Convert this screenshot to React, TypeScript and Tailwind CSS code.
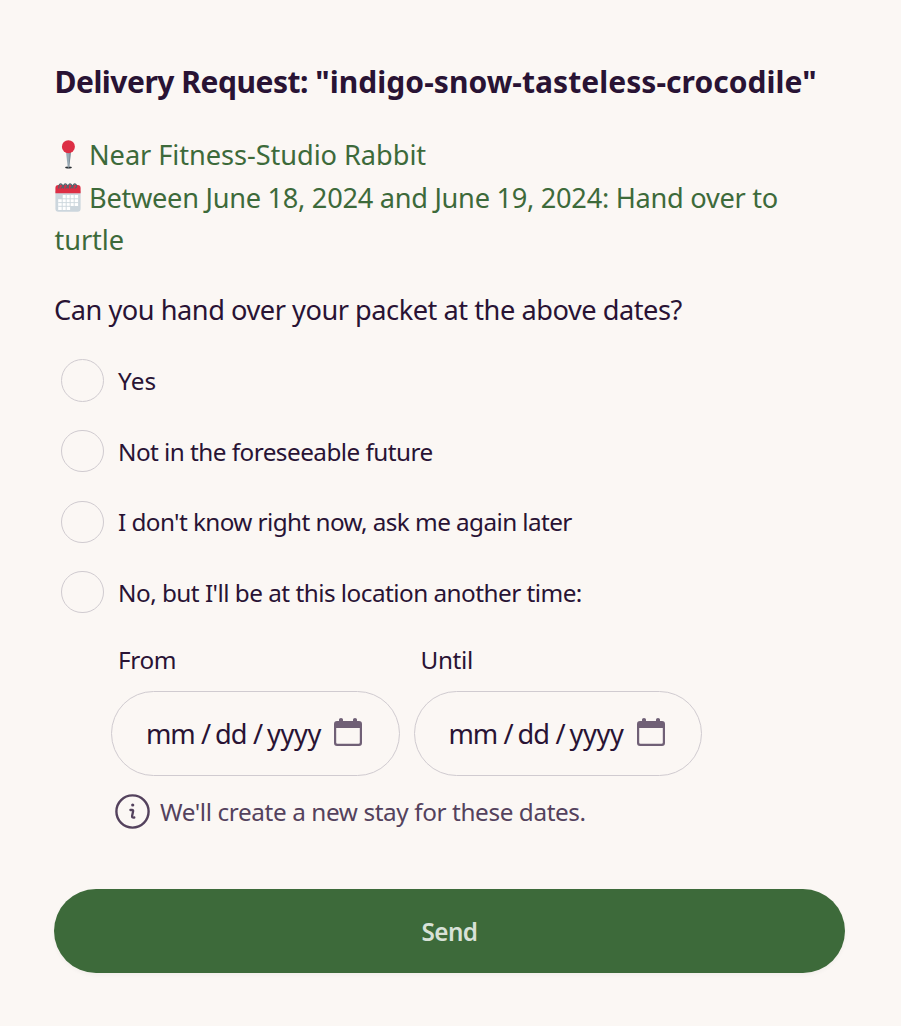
function Pin() {
  return (
    <svg viewBox="0 0 28 30" aria-hidden="true" className="-mt-px h-[30px] w-[28px] shrink-0">
      <ellipse cx="14.5" cy="27.5" rx="3.3" ry="1.1" fill="#292f33" />
      <path d="M12 12h5l-1.7 15q-.8 1-1.6 0z" fill="#99aab5" />
      <path d="M15.5 12H17l-1.7 15-.6.5z" fill="#66757f" opacity=".5" />
      <circle cx="14.4" cy="6.7" r="6.5" fill="#dd2e44" />
    </svg>
  );
}

function Calendar() {
  return (
    <svg viewBox="0 0 26 29" aria-hidden="true" className="-mt-[2px] ml-px h-[29px] w-[26px] shrink-0">
      <path d="M.4 8h25.2v17.7a3 3 0 0 1-3 3H3.4a3 3 0 0 1-3-3z" fill="#ccd6dd" />
      <path d="M.4 10.2V5a2.9 2.9 0 0 1 2.9-2.9h19.4A2.9 2.9 0 0 1 25.6 5v5.2z" fill="#dd2e44" />
      <path d="M7.3 12h15.8v11h-8v4H3.2V15.9h4.1z" fill="#fff" />
      <path d="M7.2 12v15M11.2 12v15M15.2 12v12M19.2 12v11M3.2 15.8h20M3.2 19.6h20M3.2 23.3h12" stroke="#ccd6dd" strokeWidth=".9" />
      <path d="M4 5.5C3.2 2 5.2.2 6.8 1.5S7 5.5 5.7 4.8M8.7 5.5C7.9 2 9.9.2 11.5 1.5S11.7 5.5 10.4 4.8M13.4 5.5C12.6 2 14.6.2 16.2 1.5S16.4 5.5 15.1 4.8M18.1 5.5C17.3 2 19.3.2 20.9 1.5S21.1 5.5 19.8 4.8" fill="none" stroke="#56636c" strokeWidth="1.3" />
    </svg>
  );
}

function DateField({ label }: { label: string }) {
  return (
    <div className="w-[288.5px]">
      <div className="h-[51px] pl-[7px] text-[24.3px] leading-[40px] tracking-[-0.35px]">{label}</div>
      <div className="flex h-[85px] items-center rounded-full border border-[#d0cbd0] pl-[34px] text-[27.2px]">
        <span className="w-[55px] pt-[2px] tracking-[-1.1px]">mm</span>
        <span className="w-[14px] pt-[2px]">/</span>
        <span className="w-[38px] pt-[2px] tracking-[-0.9px]">dd</span>
        <span className="w-[14px] pt-[2px]">/</span>
        <span className="w-[67px] pt-[2px] tracking-[-0.4px]">yyyy</span>
        <svg viewBox="0 0 28 28" aria-hidden="true" className="-mt-[3px] h-[28px] w-[28px] shrink-0">
          <path
            d="M5 1.5Q5 0 7 0T9 1.5V3h10V1.5Q19 0 21 0t2 1.5V3h2q3 0 3 3v19q0 3-3 3H3q-3 0-3-3V6q0-3 3-3h2zM2.2 10v14.5q0 1.3 1.3 1.3h21q1.3 0 1.3-1.3V10z"
            fill="#706076"
            fillRule="evenodd"
          />
        </svg>
      </div>
    </div>
  );
}

const options = [
  { text: "Yes", tracking: "tracking-[0.1px]" },
  { text: "Not in the foreseeable future", tracking: "tracking-[-0.54px]" },
  { text: "I don't know right now, ask me again later", tracking: "tracking-[-0.58px]" },
  { text: "No, but I'll be at this location another time:", tracking: "tracking-[-0.52px]" },
];

export default function App() {
  return (
    <main className="min-h-[1026px] bg-[#fbf7f4] px-[54px] pt-[60px] font-['Noto_Sans',sans-serif] text-[#291334]">
      <h1 className="h-[74px] whitespace-nowrap pl-[0.5px] text-[30px] font-bold leading-[44px] tracking-[0.05px]">
        <span className="tracking-[-0.48px]">Delivery Request: </span>"indigo-snow-tasteless-crocodile"
      </h1>
      <div className="h-[155px] whitespace-nowrap text-[27.2px] leading-[42.67px] text-[#3d6a3a]">
        <div className="flex items-center">
          <Pin />
          <span className="ml-[7px] tracking-[-0.06px]">Near Fitness-Studio Rabbit</span>
        </div>
        <div className="flex items-center">
          <Calendar />
          <span className="ml-[8px] tracking-[-0.28px]">Between June 18, 2024 and June 19, 2024: Hand over to</span>
        </div>
        <div className="pl-[0.5px] tracking-[-0.1px]">turtle</div>
      </div>
      <p className="h-[56.2px] whitespace-nowrap text-[27.2px] leading-[42.67px] tracking-[-0.47px]">
        Can you hand over your packet at the above dates?
      </p>
      <div role="radiogroup">
        {options.map((o) => (
          <label key={o.text} className="flex h-[70.6px] items-center whitespace-nowrap pl-[7px] text-[24.3px]">
            <input type="radio" name="availability" className="mr-[14px] h-[42.3px] w-[43px] shrink-0 appearance-none rounded-full border border-[#d0cbd0]" />
            <span className={`pt-[2px] ${o.tracking}`}>{o.text}</span>
          </label>
        ))}
      </div>
      <div className="ml-[57px] flex gap-[14px] pt-[12.4px]">
        <DateField label="From" />
        <DateField label="Until" />
      </div>
      <div className="ml-[60.5px] mt-[18px] flex h-[35px] items-center text-[24.3px] text-[#54425d]">
        <svg viewBox="0 0 35 35" aria-hidden="true" className="size-[35px] shrink-0" fill="none" stroke="#54425d">
          <circle cx="17.5" cy="17.5" r="16.1" strokeWidth="2.4" />
          <circle cx="17.7" cy="11" r="1.6" fill="#54425d" stroke="none" />
          <path d="M15.4 16h1.7q1.2 0 1 1.2l-1 4.8q-.4 1.9 2.2 1.5" strokeWidth="2.3" strokeLinecap="round" strokeLinejoin="round" />
        </svg>
        <span className="ml-[10.5px] whitespace-nowrap pt-[2px] tracking-[-0.39px]">We'll create a new stay for these dates.</span>
      </div>
      <button className="mt-[60px] h-[84px] w-[791px] rounded-full bg-[#3d6a3a] pt-[2px] text-[24.3px] font-semibold tracking-[-0.6px] text-[#d8e1d8] shadow-[0_2px_4px_rgba(0,0,0,0.04)]">
        Send
      </button>
    </main>
  );
}
